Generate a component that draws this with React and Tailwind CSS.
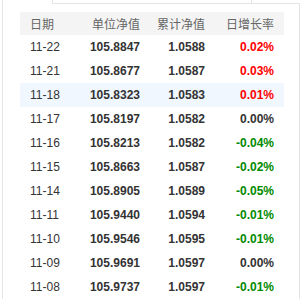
const rows = [
  ["11-22", "105.8847", "1.0588", "0.02%", "up"],
  ["11-21", "105.8677", "1.0587", "0.03%", "up"],
  ["11-18", "105.8323", "1.0583", "0.01%", "up"],
  ["11-17", "105.8197", "1.0582", "0.00%", "flat"],
  ["11-16", "105.8213", "1.0582", "-0.04%", "down"],
  ["11-15", "105.8663", "1.0587", "-0.02%", "down"],
  ["11-14", "105.8905", "1.0589", "-0.05%", "down"],
  ["11-11", "105.9440", "1.0594", "-0.01%", "down"],
  ["11-10", "105.9546", "1.0595", "-0.01%", "down"],
  ["11-09", "105.9691", "1.0597", "0.00%", "flat"],
  ["11-08", "105.9737", "1.0597", "-0.01%", "down"],
];

const rateColor = {
  up: "text-[#ff0000]",
  down: "text-[#008a00]",
  flat: "text-[#333333]",
};

export default function App() {
  return (
    <div className="flex h-[299px] w-[302px] overflow-hidden bg-white font-['Liberation_Sans',Arial,sans-serif] text-[12px]">
      <div className="ml-[2px] w-px bg-[#e4e4e4]" />
      <div className="flex w-[297px] flex-col">
        <div className="flex h-[4px]">
          <div className="ml-[49px] w-[200px] border-x border-[#e4e4e4]" />
        </div>
        <div className="ml-[49px] h-px bg-[#e4e4e4]" />
        <div className="flex-1 border-r border-[#e4e4e4] pl-[17px] pr-[15px] pt-[8px]">
          <div className="grid h-[23px] grid-cols-[60px_64px_65px_75px] items-center bg-[#f4f4f4] font-['Noto_Sans_CJK_SC',sans-serif] text-[#666666]">
            <span className="pl-[10px]">日期</span>
            <span className="pr-[4px] text-right">单位净值</span>
            <span className="pr-[4px] text-right">累计净值</span>
            <span className="pr-[10px] text-right">日增长率</span>
          </div>
          {rows.map(([date, unit, total, rate, dir], i) => (
            <div
              key={date}
              className={`grid h-[24px] grid-cols-[60px_64px_65px_75px] items-center text-[#333333] ${
                i === 2 ? "bg-[#f0f7fe]" : ""
              }`}
            >
              <span className="pl-[10px]">{date}</span>
              <span className="pr-[4px] text-right font-bold">{unit}</span>
              <span className="pr-[4px] text-right font-bold">{total}</span>
              <span className={`pr-[10px] text-right font-bold ${rateColor[dir]}`}>{rate}</span>
            </div>
          ))}
        </div>
      </div>
    </div>
  );
}
